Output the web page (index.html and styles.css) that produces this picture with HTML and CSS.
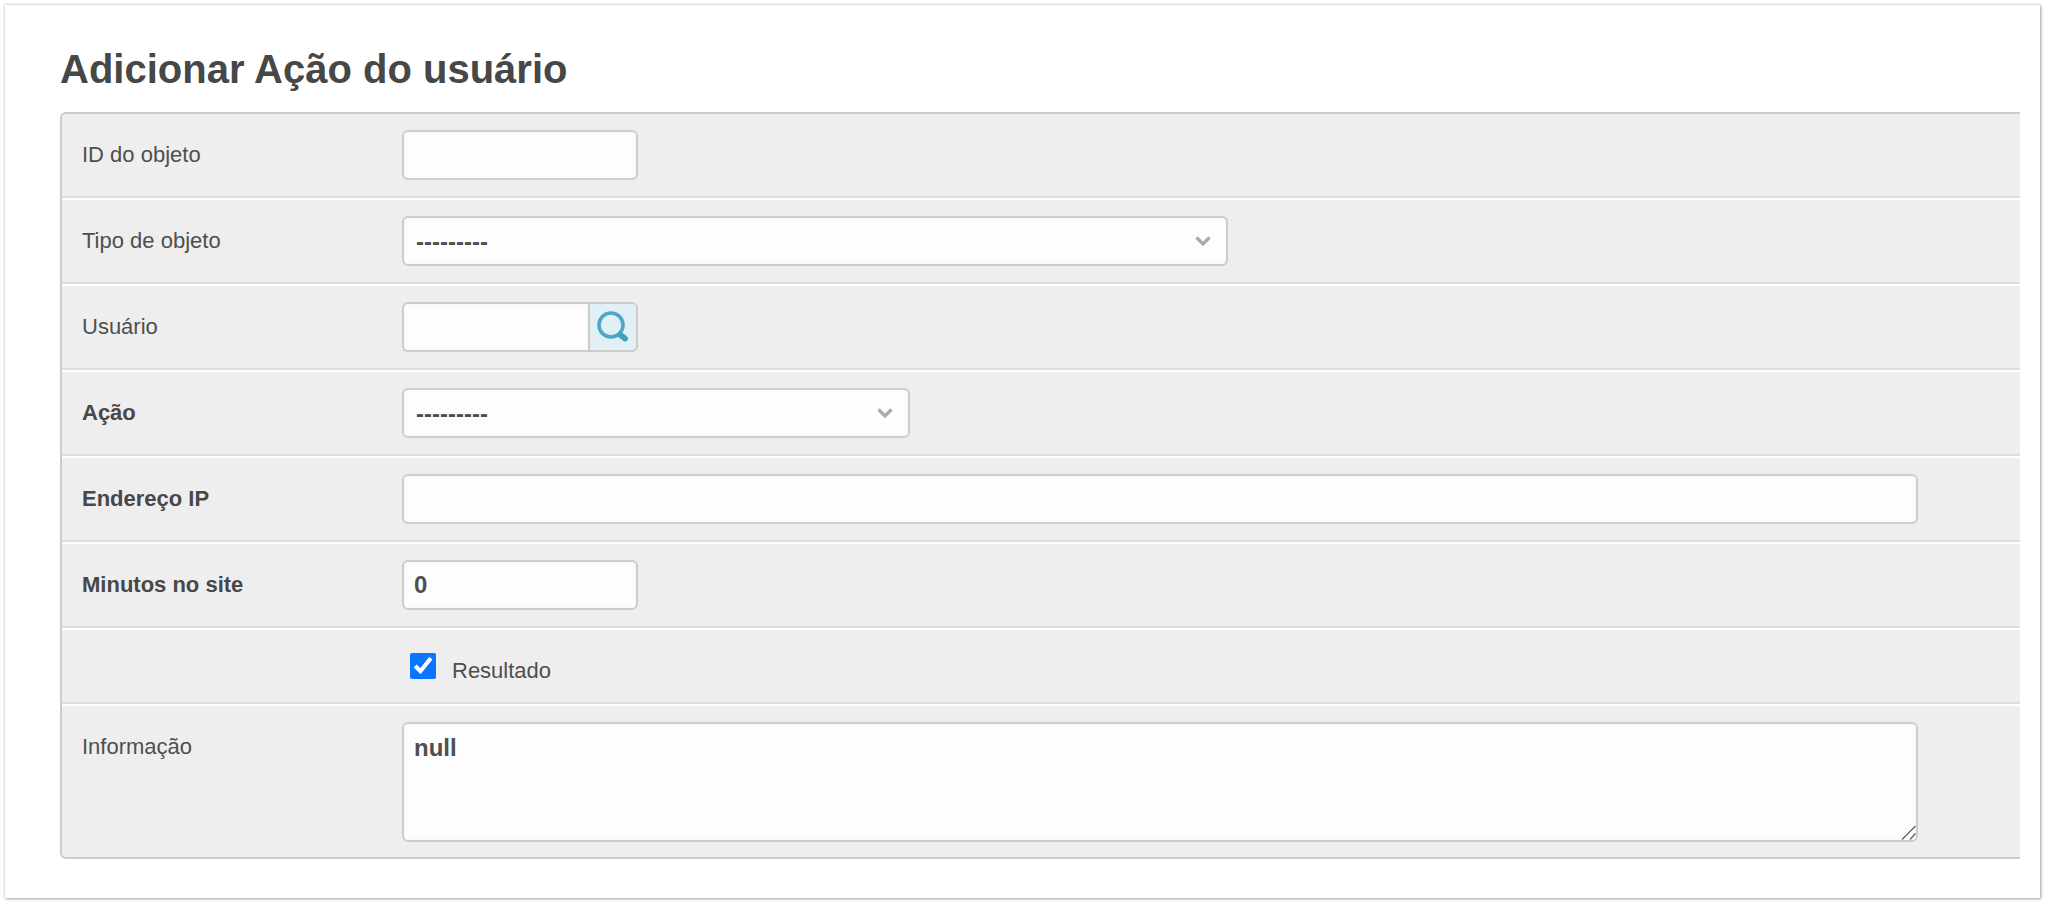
FILE: index.html
```html
<!DOCTYPE html>
<html lang="pt-BR">
<head>
<meta charset="utf-8">
<title>Adicionar Ação do usuário</title>
<link rel="stylesheet" href="styles.css">
</head>
<body>
<main class="card">
  <h1 class="title">Adicionar Ação do usuário</h1>
  <form class="module">
    <div class="row">
      <label class="label">ID do objeto</label>
      <input class="field short" type="text">
    </div>
    <div class="row">
      <label class="label">Tipo de objeto</label>
      <div class="select-wrap wide-select">
        <select class="field select"><option>---------</option></select>
        <svg class="chevron" viewBox="0 0 16 10" aria-hidden="true"><path d="M1.5 1.5l6.5 6.5 6.5-6.5" fill="none" stroke="#aaa" stroke-width="3.2"/></svg>
      </div>
    </div>
    <div class="row">
      <label class="label">Usuário</label>
      <div class="lookup">
        <input class="field lookup-input" type="text">
        <a class="lookup-btn" href="#" aria-label="Buscar">
          <svg viewBox="0 0 36 36" width="36" height="36" aria-hidden="true">
            <circle cx="16" cy="16" r="12" fill="none" stroke="#4ca8c6" stroke-width="3.6"/>
            <path d="M25.5 26l4.5 3.5" fill="none" stroke="#3f9fbf" stroke-width="6" stroke-linecap="round"/>
          </svg>
        </a>
      </div>
    </div>
    <div class="row">
      <label class="label strong">Ação</label>
      <div class="select-wrap mid-select">
        <select class="field select"><option>---------</option></select>
        <svg class="chevron" viewBox="0 0 16 10" aria-hidden="true"><path d="M1.5 1.5l6.5 6.5 6.5-6.5" fill="none" stroke="#aaa" stroke-width="3.2"/></svg>
      </div>
    </div>
    <div class="row">
      <label class="label strong">Endereço IP</label>
      <input class="field full" type="text">
    </div>
    <div class="row">
      <label class="label strong">Minutos no site</label>
      <input class="field short" type="text" value="0">
    </div>
    <div class="row check-row">
      <span class="label"></span>
      <label class="check">
        <input class="checkbox" type="checkbox" checked>
        <span>Resultado</span>
      </label>
    </div>
    <div class="row top-row">
      <label class="label">Informação</label>
      <div class="area-wrap">
        <textarea class="field area">null</textarea>
        <svg class="grip" viewBox="0 0 15 15" aria-hidden="true"><path d="M1 14.5L14.5 1M9 14.5L14.5 8.5" fill="none" stroke="#666" stroke-width="1.4"/></svg>
      </div>
    </div>
  </form>
</main>
</body>
</html>
```

FILE: styles.css
```css
* { box-sizing: border-box; }
html, body { margin: 0; height: 100%; overflow: hidden; background: #fff; }
body {
  padding: 5px 6px 6px 5px;
  font-family: "Liberation Sans", Arial, sans-serif;
  color: #4a4a4a;
}
.card {
  height: 893px;
  padding: 0 20px 0 55px;
  background: #fff;
  box-shadow: 0 0 2px 1px rgba(0, 0, 0, 0.12), 1px 1px 3px rgba(0, 0, 0, 0.28);
}
.title {
  margin: 0;
  height: 107px;
  padding-top: 41px;
  font-size: 40px;
  line-height: 46px;
  font-weight: 700;
  color: #474747;
}
.module {
  border: 2px solid #ccc;
  border-right: 0;
  border-radius: 6px 0 0 6px;
  background: #eee;
}
.row {
  display: flex;
  align-items: center;
  padding: 16px 0;
  border-top: 2px solid #fff;
  border-bottom: 2px solid #ddd;
}
.row:first-child { border-top: 0; }
.row:last-child { border-bottom: 0; padding-bottom: 15px; }
.label {
  flex: 0 0 340px;
  padding-left: 20px;
  font-size: 22px;
  line-height: 26px;
  color: #4f4f4f;
}
.strong { font-weight: 700; color: #474747; }
.field {
  display: block;
  height: 50px;
  margin: 0;
  padding: 0 10px;
  border: 2px solid #ccc;
  border-radius: 6px;
  background: #fdfdfd;
  box-shadow: inset 0 0 5px #f6f6f6;
  font-family: inherit;
  font-size: 24px;
  font-weight: 700;
  color: #4f4f4f;
  outline: 0;
}
.short { width: 236px; }
.full { width: 1516px; }
.select-wrap { position: relative; }
.wide-select { width: 826px; }
.mid-select { width: 508px; }
.select {
  width: 100%;
  padding-left: 12px;
  appearance: none;
  -webkit-appearance: none;
}
.chevron {
  position: absolute;
  right: 17px;
  top: 20px;
  width: 16px;
  height: 10px;
}
.lookup { display: flex; width: 236px; height: 50px; }
.lookup-input { flex: 1; min-width: 0; border-radius: 6px 0 0 6px; border-right: 0; }
.lookup-btn {
  display: flex;
  align-items: center;
  justify-content: center;
  flex: 0 0 50px;
  border: 2px solid #ccc;
  border-radius: 0 6px 6px 0;
  background: #e1f0f5;
}
.check-row { padding: 0; height: 76px; }
.check {
  display: flex;
  align-items: center;
  gap: 16px;
  margin-left: 8px;
  font-size: 22px;
  line-height: 26px;
  color: #4f4f4f;
}
.check span { position: relative; top: 5px; }
.checkbox {
  width: 26px;
  height: 26px;
  margin: 0;
  accent-color: #0a75ff;
}
.top-row { align-items: flex-start; }
.top-row .label { padding-top: 12px; }
.area-wrap { position: relative; width: 1516px; height: 120px; }
.area {
  width: 100%;
  height: 120px;
  padding: 10px 10px;
  line-height: 28px;
  resize: none;
}
.grip {
  position: absolute;
  right: 2px;
  bottom: 2px;
  width: 15px;
  height: 15px;
}
```
